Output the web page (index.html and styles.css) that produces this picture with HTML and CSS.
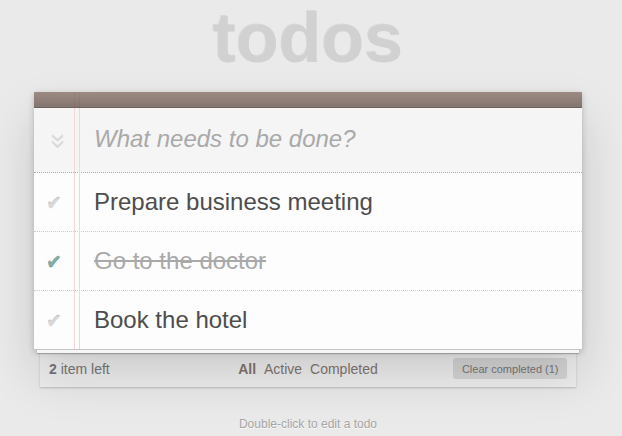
FILE: index.html
```html
<!DOCTYPE html>
<html lang="en">
<head>
<meta charset="utf-8">
<title>todos</title>
<link rel="stylesheet" href="styles.css">
</head>
<body>
<div class="page">
  <h1 class="title">todos</h1>
  <section class="app">
    <div class="app-bar"></div>
    <div class="new-row">
      <span class="toggle-all">»</span>
      <input class="new-todo" placeholder="What needs to be done?">
    </div>
    <ul class="list">
      <li class="item"><span class="check">✔</span><span class="label">Prepare business meeting</span></li>
      <li class="item is-done"><span class="check">✔</span><span class="label">Go to the doctor</span></li>
      <li class="item"><span class="check">✔</span><span class="label">Book the hotel</span></li>
    </ul>
  </section>
  <div class="sheet"></div>
  <footer class="footer">
    <span class="count"><strong>2</strong> item left</span>
    <span class="filters">
      <a class="filter is-selected">All</a>
      <a class="filter">Active</a>
      <a class="filter">Completed</a>
    </span>
    <span class="clear-wrap"><span class="clear">Clear completed (1)</span></span>
  </footer>
  <p class="info">Double-click to edit a todo</p>
</div>
</body>
</html>
```

FILE: styles.css
```css
* { box-sizing: border-box; }

html, body {
  margin: 0;
  padding: 0;
}

body {
  background: #eaeaea;
  font-family: "Liberation Sans", Arial, sans-serif;
  font-size: 14px;
  color: #4d4d4d;
}

.page {
  width: 548px;
  margin-left: 34px;
}

.title {
  margin: 3px 0 19px;
  font-size: 70px;
  line-height: 70px;
  font-weight: bold;
  text-align: center;
  color: #d1d1d1;
  text-shadow: -1px -1px 0 rgba(0, 0, 0, 0.07);
}

.app {
  position: relative;
  background: rgba(255, 255, 255, 0.9);
  border-bottom: 1px solid #c4c4c4;
  box-shadow: 0 2px 6px 0 rgba(0, 0, 0, 0.2), 0 25px 50px 0 rgba(0, 0, 0, 0.15);
  border-radius: 2px 2px 0 0;
}

.app::before {
  content: "";
  position: absolute;
  top: 0;
  bottom: 0;
  left: 40px;
  width: 4px;
  border-left: 1px solid #f5d6d6;
  border-right: 1px solid #f5d6d6;
  z-index: 1;
}

.app-bar {
  position: relative;
  z-index: 2;
  height: 16px;
  border-bottom: 1px solid #6c615c;
  background: linear-gradient(to bottom, rgba(132, 110, 100, 0.8), rgba(101, 84, 76, 0.8));
  border-radius: 1px 1px 0 0;
}

.new-row {
  position: relative;
  display: flex;
  align-items: center;
  height: 64px;
  background: rgba(0, 0, 0, 0.03);
}

.toggle-all {
  width: 48px;
  flex: none;
  text-align: center;
  font-size: 28px;
  color: #d9d9d9;
  transform: rotate(90deg) translate(1px, -0.5px);
  line-height: 20px;
}

.new-todo {
  flex: 1;
  min-width: 0;
  border: none;
  outline: none;
  background: transparent;
  font-family: inherit;
  font-size: 24px;
  padding: 0 0 3px 12px;
  color: #4d4d4d;
}

.new-todo::placeholder {
  font-style: italic;
  color: #a9a9a9;
}

.list {
  margin: 0;
  padding: 0;
  list-style: none;
  border-top: 1px dotted #adadad;
}

.item {
  display: flex;
  align-items: center;
  height: 59px;
  border-bottom: 1px dotted #ccc;
  font-size: 24px;
}

.item:last-child {
  border-bottom: none;
  height: 58px;
}

.check {
  width: 40px;
  flex: none;
  text-align: center;
  font-family: "DejaVu Sans", sans-serif;
  font-size: 19px;
  color: #d9d9d9;
  text-shadow: 0 -1px 0 #bfbfbf;
  padding-top: 1px;
}

.is-done .check {
  color: #85ada7;
  text-shadow: 0 1px 0 #669991;
  padding-top: 0;
}

.label {
  margin-left: 20px;
  line-height: 28px;
  padding-bottom: 1px;
  white-space: pre;
}

.is-done .label {
  color: #a9a9a9;
  text-decoration: line-through;
}

.sheet {
  height: 3px;
  margin: 0 3px;
  background: #f6f6f6;
  box-shadow: 0 1px 1px rgba(0, 0, 0, 0.25);
  position: relative;
  z-index: 1;
}

.footer {
  display: flex;
  align-items: center;
  justify-content: space-between;
  height: 34px;
  margin: 0 6px;
  padding: 0 9px 2px;
  background: #eeeeee;
  box-shadow: 0 1px 2px rgba(0, 0, 0, 0.2);
  color: #777;
  line-height: 20px;
}

.count {
  flex: 1;
}

.filters {
  flex: none;
  text-align: center;
}

.filter {
  color: #83756f;
  margin: 0 2px;
}

.filter.is-selected {
  font-weight: bold;
}

.clear-wrap {
  flex: 1;
  display: flex;
  justify-content: flex-end;
}

.clear {
  display: inline-block;
  line-height: 20px;
  font-size: 11px;
  padding: 0 8.5px;
  border-radius: 3px;
  background: rgba(0, 0, 0, 0.1);
  box-shadow: 0 -1px 0 0 rgba(0, 0, 0, 0.12);
  color: #777;
}

.info {
  margin: 30px 0 0;
  text-align: center;
  font-size: 12px;
  color: #a6a6a6;
  text-shadow: 0 1px 0 rgba(255, 255, 255, 0.7);
}
```
